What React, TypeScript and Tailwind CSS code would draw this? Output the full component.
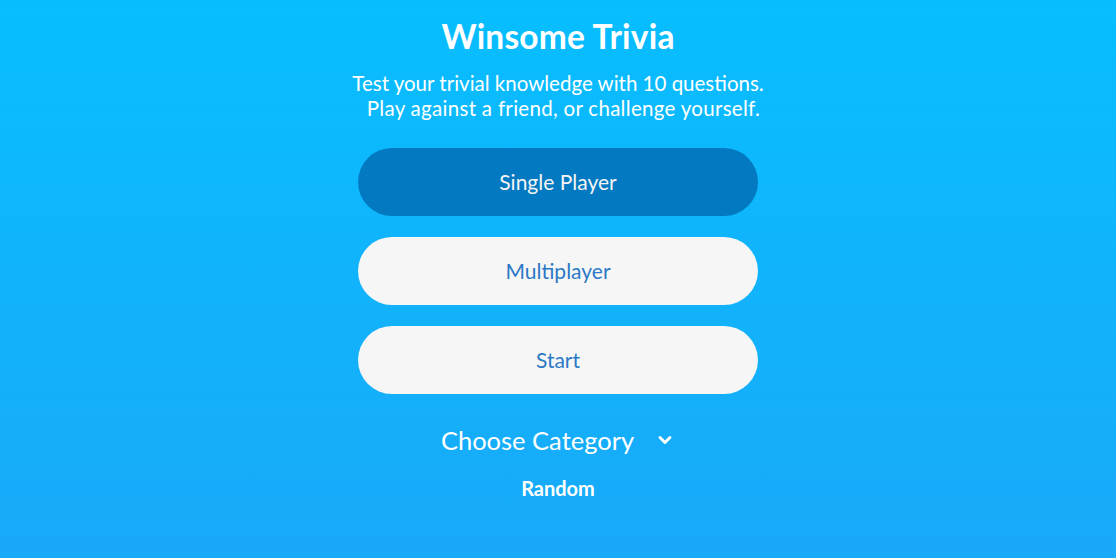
import { ChevronDown } from 'lucide-react'

const modes = [
  { label: 'Single Player', active: true },
  { label: 'Multiplayer', active: false },
  { label: 'Start', active: false },
]

export default function App() {
  return (
    <div className="min-h-[558px] w-full bg-gradient-to-b from-[#06beff] to-[#18a9f8] font-['Lato',sans-serif] text-white">
      <div className="mx-auto flex w-[400px] flex-col items-center pt-[14px]">
        <h1 className="text-[33.5px] font-bold leading-[44px] tracking-[0.2px]">Winsome Trivia</h1>

        <p className="mt-[13px] w-[460px] text-center text-[20.5px] leading-[25px]">
          Test your trivial knowledge with 10 questions.
          <br />
          <span className="pl-[11px] tracking-[0.3px]">Play against a friend, or challenge yourself.</span>
        </p>

        <div className="mt-[27px] flex w-full flex-col gap-[21px]">
          {modes.map((m) => (
            <button
              key={m.label}
              className={
                m.active
                  ? 'h-[68px] w-full rounded-full bg-[#0279c0] text-[21px] text-[#f4f4f4]'
                  : 'h-[68px] w-full rounded-full bg-[#f6f6f6] text-[21px] text-[#2c79c6]'
              }
            >
              {m.label}
            </button>
          ))}
        </div>

        <div className="mt-[30px] flex items-center gap-[21px]">
          <span className="text-[25.5px] leading-[32px]">Choose Category</span>
          <ChevronDown size={20} strokeWidth={3.5} />
        </div>

        <div className="mt-[17px] text-[20px] font-bold">Random</div>
      </div>
    </div>
  )
}
